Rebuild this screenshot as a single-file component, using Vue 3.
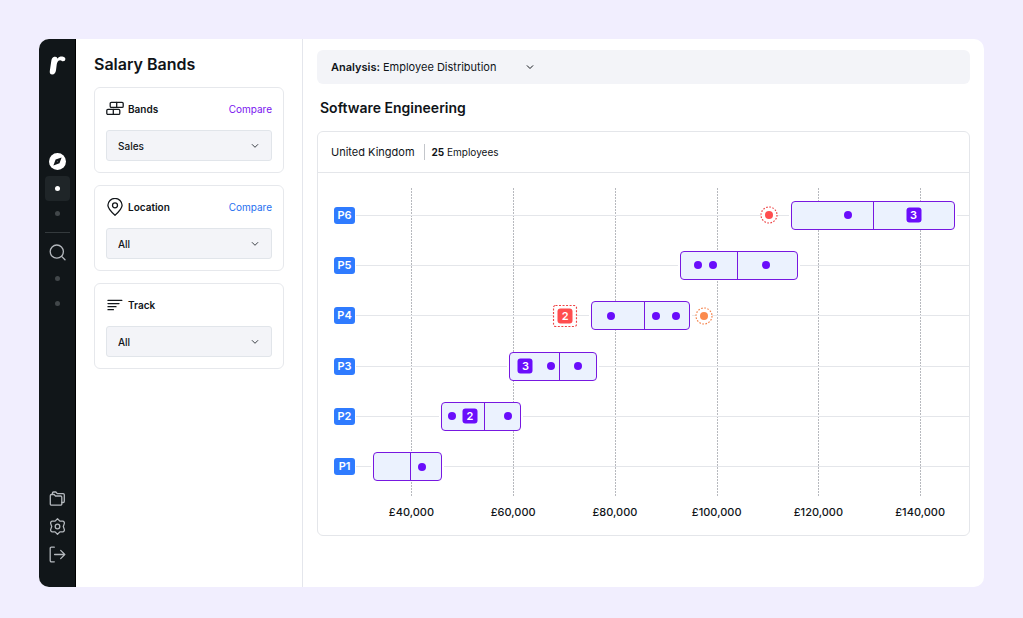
<script setup>
import { ref } from 'vue'

const filters = [
  { id: 'bands', label: 'Bands', icon: 'bands', options: ['Sales', 'Engineering'], compare: 'violet' },
  { id: 'location', label: 'Location', icon: 'pin', options: ['All'], compare: 'blue' },
  { id: 'track', label: 'Track', icon: 'lines', options: ['All'], compare: null }
]
const selected = ref({ bands: 'Sales', location: 'All', track: 'All' })
const analysis = ref('Employee Distribution')

const domain = { min: 29.1, max: 149.6 }
const pct = (v) => ((v - domain.min) / (domain.max - domain.min)) * 100 + '%'
const span = (a, b) => ((b - a) / (domain.max - domain.min)) * 100 + '%'

const ticks = [40, 60, 80, 100, 120, 140]

const rows = [
  { level: 'P6', from: 114.6, mid: 130.8, to: 146.9, marks: [{ at: 125.9 }, { at: 138.7, count: 3 }, { at: 110.2, tone: 'red' }] },
  { level: 'P5', from: 92.8, mid: 103.9, to: 115.9, marks: [{ at: 96.3 }, { at: 99.2 }, { at: 109.6 }] },
  { level: 'P4', from: 75.3, mid: 85.7, to: 94.8, marks: [{ at: 79.2 }, { at: 88 }, { at: 92.1 }, { at: 70.2, count: 2, tone: 'red' }, { at: 97.6, tone: 'orange' }] },
  { level: 'P3', from: 59.1, mid: 69, to: 76.5, marks: [{ at: 62.4, count: 3 }, { at: 67.5 }, { at: 72.7 }] },
  { level: 'P2', from: 45.9, mid: 54.3, to: 61.5, marks: [{ at: 47.9 }, { at: 51.5, count: 2 }, { at: 59 }] },
  { level: 'P1', from: 32.4, mid: 39.8, to: 46, marks: [{ at: 42 }] }
]
</script>

<template>
  <div class="page">
    <div class="window">
      <nav class="rail" aria-label="Main">
        <svg class="logo" viewBox="0 0 17 19" aria-hidden="true">
          <path d="M4.200 1.200C5.500.5 7.400.6 8 1.400c.2.400.2.900.1 1.300C9.600 1 11.600.4 13.400.6c2.400.2 3.500 2 2.800 3.500-.6 1.300-2.500 1.600-3.600.6-.9-.8-2.200-.7-3.100.1-1 .9-1.500 2.300-1.800 4L7 14.200c-.4 2.400-1.600 4.200-3.700 4.200-2.200 0-2.800-1.600-2.500-3.500L2.200 5.600C2.500 3.800 2.800 2 4.200 1.200z" fill="#fff" />
        </svg>
        <button class="item first" aria-label="Explore">
          <svg width="17" height="17" viewBox="0 0 17 17">
            <circle cx="8.500" cy="8.500" r="8.500" fill="#fff" />
            <path d="M12.600 4.400 10.500 10.300 4.400 12.600 6.600 6.600z" fill="#111619" />
            <circle cx="8.500" cy="8.500" r="0.700" fill="#555b60" />
          </svg>
        </button>
        <button class="item active" aria-label="Salary bands"><span class="pip"></span></button>
        <button class="item" aria-label="View"><span class="pip"></span></button>
        <hr class="rule" />
        <button class="item" aria-label="Search">
          <svg class="line" width="17" height="17" viewBox="0 0 17 17">
            <circle cx="7.800" cy="7.600" r="6.600" />
            <path d="M12.600 12.400 16 15.800" />
          </svg>
        </button>
        <div class="pair">
          <button class="item" aria-label="View"><span class="pip"></span></button>
          <button class="item" aria-label="View"><span class="pip"></span></button>
        </div>
        <div class="bottom">
          <button class="item tall" aria-label="Files">
            <svg class="line" width="17" height="17" viewBox="0 0 17 17">
              <path d="M1.300 5.700a1.200 1.200 0 0 1 1.200-1.200h2.600l1.400 1.500h5.100a1.200 1.200 0 0 1 1.200 1.200v6.700a1.200 1.200 0 0 1-1.200 1.200H2.500a1.200 1.200 0 0 1-1.200-1.200z" />
              <path d="M3.400 4.400V3.200a1.200 1.200 0 0 1 1.200-1.200h2.300l1.400 1.600h5.800a1.200 1.200 0 0 1 1.200 1.200v6.500a1.200 1.200 0 0 1-1.200 1.200h-1.200" />
            </svg>
          </button>
          <button class="item tall" aria-label="Settings">
            <svg class="line" width="17" height="17" viewBox="0 0 17 17">
              <path d="M8.500.8 10.900 3.100 14 3.200Q15.800 3.900 15.300 5.600L14.300 8.500 15.300 11.400Q15.800 13.100 14 13.800L10.900 13.900 8.500 16.200 6.100 13.900 3 13.800Q1.200 13.100 1.700 11.400L2.700 8.500 1.700 5.600Q1.200 3.900 3 3.200L6.100 3.100z" />
              <circle cx="8.500" cy="8.500" r="2.300" />
            </svg>
          </button>
          <button class="item tall" aria-label="Log out">
            <svg class="line" width="17" height="17" viewBox="0 0 17 17">
              <path d="M5.300 1.200H2.400a1.200 1.200 0 0 0-1.200 1.200v12.200a1.200 1.200 0 0 0 1.200 1.200h2.900" />
              <path d="M5.600 8.500h10.200M11.700 4.400l4.100 4.100-4.100 4.100" />
            </svg>
          </button>
        </div>
      </nav>

      <aside class="side">
        <h1>Salary Bands</h1>
        <section v-for="f in filters" :key="f.id" class="card">
          <div class="head">
            <svg v-if="f.icon === 'bands'" class="ico" width="18" height="18" viewBox="0 0 18 18">
              <rect x="4.200" y="2.400" width="13" height="5" rx="1.200" />
              <rect x="0.800" y="9.400" width="13" height="5" rx="1.200" />
              <path d="M10.700 2.400v5M7.300 9.400v5" />
            </svg>
            <svg v-else-if="f.icon === 'pin'" class="ico" width="18" height="18" viewBox="0 0 18 18">
              <path d="M9 17.300C5 13.700 1.900 10.700 1.900 7.300A7.100 6.900 0 0 1 16.100 7.300C16.100 10.700 13 13.700 9 17.300z" />
              <circle cx="9" cy="7.300" r="2.500" />
            </svg>
            <svg v-else class="ico" width="18" height="18" viewBox="0 0 18 18">
              <path d="M2 4.400h13.800M2 7.600h11M2 10.700h8M2 13.700h5.400" />
            </svg>
            <label :for="f.id">{{ f.label }}</label>
            <a v-if="f.compare" href="#" :class="f.compare">Compare</a>
          </div>
          <div class="field">
            <select :id="f.id" v-model="selected[f.id]">
              <option v-for="o in f.options" :key="o">{{ o }}</option>
            </select>
            <svg class="chev" width="8" height="6" viewBox="0 0 8 6"><path d="M1.200 1.500 4 4.300l2.800-2.800" /></svg>
          </div>
        </section>
      </aside>

      <main class="main">
        <div class="analysis">
          <label for="analysis">Analysis:</label>
          <div class="pick">
            <select id="analysis" v-model="analysis">
              <option>Employee Distribution</option>
            </select>
            <svg class="chev" width="8" height="6" viewBox="0 0 8 6"><path d="M1.200 1.700 4 4.500l2.800-2.800" /></svg>
          </div>
        </div>
        <h2>Software Engineering</h2>
        <section class="chart">
          <header>
            <span class="country">United Kingdom</span>
            <span class="count"><b>25</b> Employees</span>
          </header>
          <div class="body">
            <div class="plot">
              <div class="grid">
                <i v-for="t in ticks" :key="t" :style="{ left: pct(t) }"></i>
              </div>
              <div v-for="r in rows" :key="r.level" class="row">
                <span class="level">{{ r.level }}</span>
                <div class="track">
                  <div class="band" :style="{ left: pct(r.from), width: span(r.from, r.to) }"></div>
                  <div class="mid" :style="{ left: pct(r.mid) }"></div>
                  <span
                    v-for="m in r.marks"
                    :key="m.at"
                    class="mark"
                    :class="[m.tone, m.count ? 'num' : 'dot']"
                    :style="{ left: pct(m.at) }"
                  >
                    {{ m.count }}
                    <svg v-if="m.tone && m.count" class="ring" width="25" height="23" viewBox="0 0 25 23">
                      <rect x="1" y="1" width="23" height="21" rx="2" stroke-dasharray="2 1.520" />
                    </svg>
                    <svg v-else-if="m.tone" class="ring" width="18" height="18" viewBox="0 0 18 18">
                      <circle cx="9" cy="9" r="8" stroke-dasharray="1.600 1.542" />
                    </svg>
                  </span>
                </div>
              </div>
            </div>
            <div class="axis">
              <span v-for="t in ticks" :key="t" :style="{ left: pct(t) }">£{{ t }},000</span>
            </div>
          </div>
        </section>
      </main>
    </div>
  </div>
</template>

<style>
body {
  background: #f1eefe;
}
</style>

<style scoped>
* {
  box-sizing: border-box;
}
.page {
  min-height: 100vh;
  padding: 39px 39px 31px;
  display: flex;
  background: #f1eefe;
  font-family: Inter, "Liberation Sans", sans-serif;
  font-size: 11px;
  line-height: 16px;
  color: #101418;
}
.window {
  flex: 1;
  min-width: 0;
  display: flex;
  background: #fff;
  border-radius: 10px;
  overflow: hidden;
}
.rail {
  width: 37px;
  flex: none;
  display: flex;
  flex-direction: column;
  align-items: center;
  padding: 17px 0 19px;
  background: #111619;
  border-right: 1px solid #000;
}
.logo {
  width: 17px;
  height: 19px;
}
.item {
  width: 25px;
  height: 25px;
  padding: 0;
  border: 0;
  border-radius: 4px;
  background: none;
  display: flex;
  align-items: center;
  justify-content: center;
}
.first {
  margin: 74px 0 2px;
}
.active {
  background: #1f2528;
}
.tall {
  height: 28px;
}
.pip {
  width: 5px;
  height: 5px;
  border-radius: 50%;
  background: #42474a;
}
.active .pip {
  background: #fff;
}
.rule {
  width: 25px;
  height: 1px;
  margin: 6px 0 7px;
  border: 0;
  background: #343a3d;
}
.line {
  fill: none;
  stroke: #b4b8bd;
  stroke-width: 1.3;
  stroke-linecap: round;
  stroke-linejoin: round;
}
.pair {
  margin-top: 1px;
}
.bottom {
  margin-top: auto;
}
.side {
  width: 227px;
  flex: none;
  padding: 15px 18px;
  border-right: 1px solid #e4e6ec;
  display: flex;
  flex-direction: column;
  gap: 12px;
}
h1 {
  margin: 0;
  font-size: 16px;
  line-height: 21px;
  font-weight: 600;
}
.card {
  padding: 12px 11px 11px;
  border: 1px solid #e6e8ec;
  border-radius: 6px;
}
.head {
  display: flex;
  align-items: center;
  height: 18px;
  margin-bottom: 12px;
  font-size: 10px;
}
.head label {
  margin-left: 4px;
  font-weight: 600;
}
.head a {
  margin-left: auto;
  text-decoration: none;
}
.violet {
  color: #7a12f0;
}
.blue {
  color: #1f6ff0;
}
.ico {
  fill: none;
  stroke: #14181c;
  stroke-width: 1.3;
  stroke-linecap: round;
  stroke-linejoin: round;
}
.field,
.pick {
  position: relative;
}
select {
  appearance: none;
  display: block;
  margin: 0;
  font: inherit;
  color: inherit;
}
.field select {
  width: 100%;
  height: 31px;
  padding: 0 11px;
  border: 1px solid #e1e5ea;
  border-radius: 3px;
  background: #f3f4f8;
  font-size: 10px;
  font-weight: 500;
}
.chev {
  position: absolute;
  right: 13px;
  top: 0;
  bottom: 0;
  margin: auto 0;
  fill: none;
  stroke: #3b4046;
  stroke-width: 1;
  stroke-linecap: round;
  stroke-linejoin: round;
  pointer-events: none;
}
.main {
  flex: 1;
  min-width: 0;
  padding: 11px 14px;
}
.analysis {
  display: flex;
  align-items: center;
  height: 34px;
  padding: 0 14px;
  border-radius: 6px;
  background: #f3f4f8;
}
.analysis label {
  font-weight: 600;
  margin-right: 3px;
}
.pick select {
  padding: 0 37px 0 0;
  border: 0;
  background: transparent;
}
.pick .chev {
  right: 0;
  stroke: #14181c;
}
h2 {
  margin: 12px 3px;
  font-size: 14px;
  line-height: 23px;
  font-weight: 600;
}
.chart {
  border: 1px solid #e4e6ea;
  border-radius: 6px;
}
header {
  display: flex;
  align-items: center;
  height: 41px;
  padding: 0 13px;
  border-bottom: 1px solid #e4e6ea;
}
.count {
  margin-left: 9px;
  padding-left: 7px;
  border-left: 1px solid #c3c6cb;
  font-size: 10px;
}
.count b {
  font-weight: 700;
}
.body {
  padding: 17px 0 15px;
}
.plot {
  position: relative;
  height: 302px;
  display: grid;
  grid-template-rows: repeat(6, 1fr);
}
.grid {
  position: absolute;
  top: -2px;
  bottom: -5px;
  left: 38px;
  right: 0;
}
.grid i {
  position: absolute;
  top: 0;
  bottom: 0;
  width: 1px;
  background: repeating-linear-gradient(#b7b9be 0 2px, transparent 2px 3px);
}
.row {
  display: flex;
  align-items: center;
  padding-left: 16px;
}
.level {
  width: 21px;
  height: 17px;
  margin-right: 1px;
  border-radius: 3px;
  background: #2f7bff;
  color: #fff;
  font-weight: 600;
  line-height: 17px;
  text-align: center;
}
.track {
  position: relative;
  flex: 1;
  height: 29px;
}
.track::before {
  content: "";
  position: absolute;
  left: 0;
  right: 0;
  top: 14px;
  height: 1px;
  background: #e4e6ea;
}
.band {
  position: absolute;
  top: 0;
  bottom: 0;
  border: 1px solid #7718e0;
  border-radius: 4px;
  background: #ebf2fe;
  box-shadow: 2px 0 #fff, -2px 0 #fff;
}
.mid {
  position: absolute;
  top: 0;
  bottom: 0;
  width: 1px;
  background: #7718e0;
}
.mark {
  position: absolute;
  top: 50%;
  transform: translate(-50%, -50%);
  background: #6a0dfb;
}
.dot {
  width: 8px;
  height: 8px;
  border-radius: 50%;
}
.num {
  width: 15px;
  height: 15px;
  border-radius: 3px;
  color: #fff;
  font-weight: 600;
  line-height: 15px;
  text-align: center;
}
.red {
  background: #ff4d4f;
  box-shadow: 0 0 0 4px #fff;
  color: #fff;
}
.orange {
  background: #fb8b4e;
  box-shadow: 0 0 0 4px #fff;
}
.ring {
  position: absolute;
  inset: -100%;
  margin: auto;
  fill: none;
  stroke: #ee4446;
  stroke-width: 1.2;
}
.orange .ring {
  stroke: #f5824a;
}
.axis {
  position: relative;
  height: 16px;
  margin: 12px 0 0 38px;
  font-weight: 500;
}
.axis span {
  position: absolute;
  transform: translateX(-50%);
}
</style>
